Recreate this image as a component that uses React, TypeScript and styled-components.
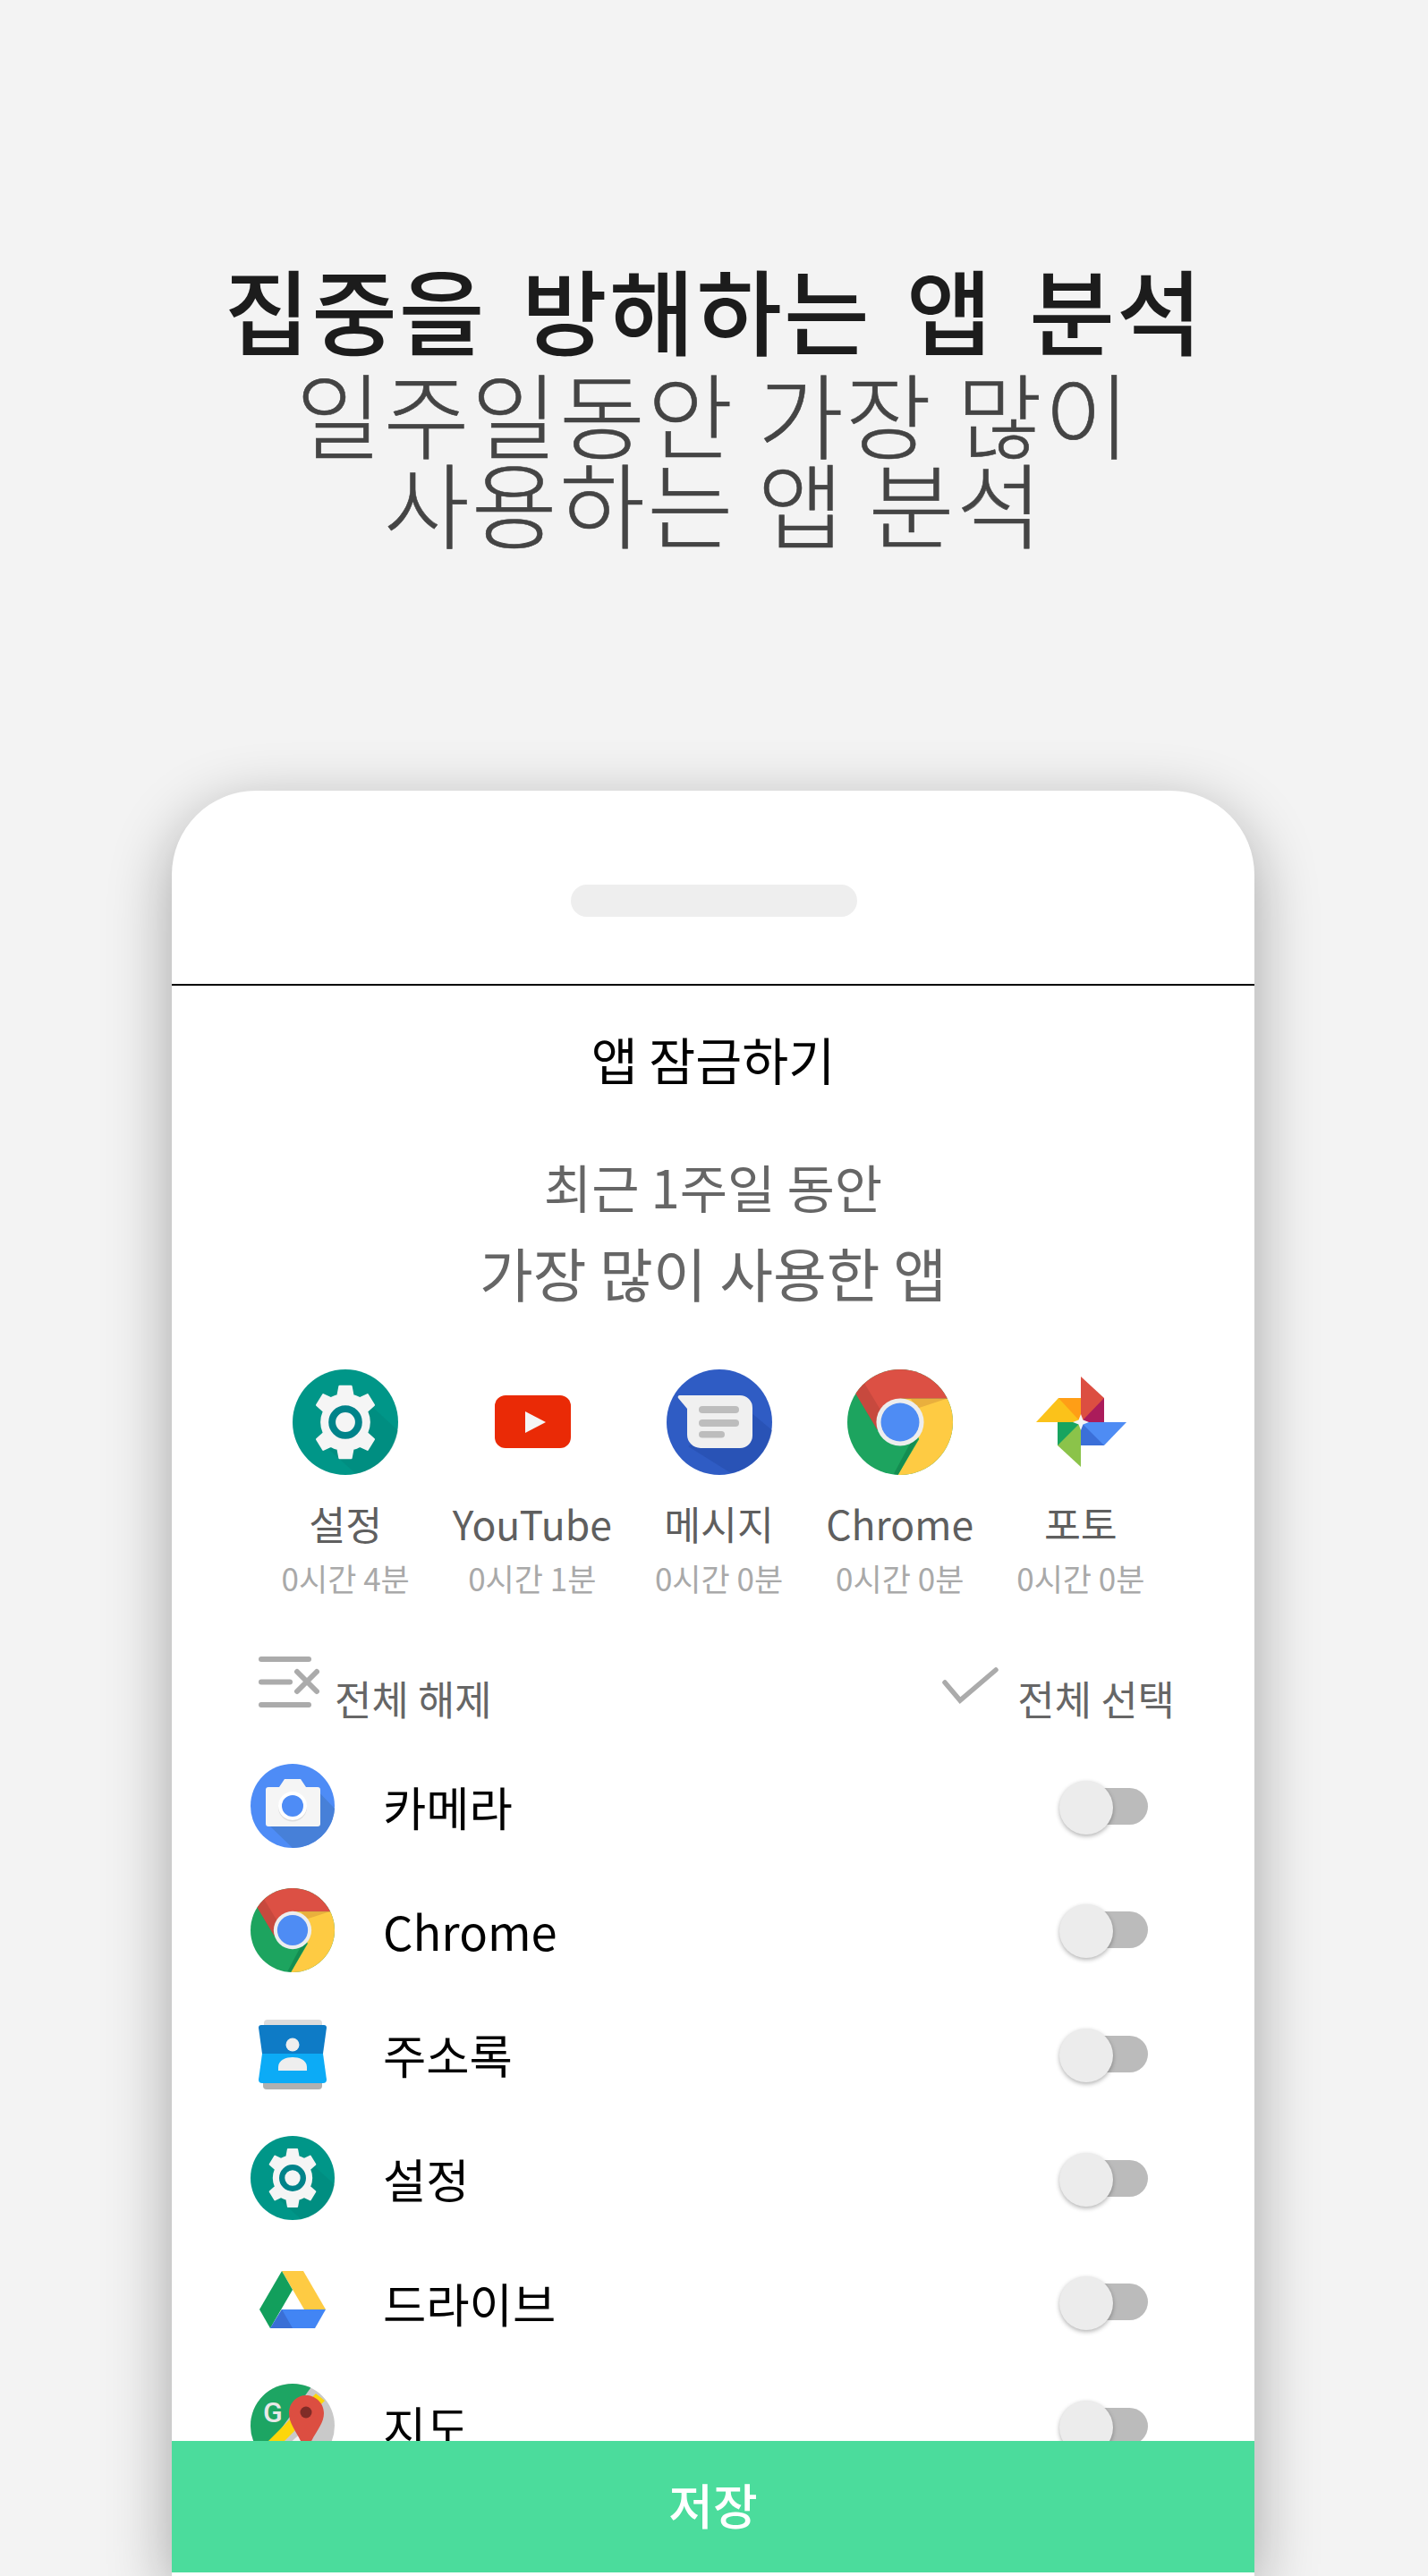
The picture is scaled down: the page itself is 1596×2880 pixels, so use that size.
import React from "react";
import styled, { createGlobalStyle } from "styled-components";

const FONT = `"Noto Sans CJK KR", "Noto Sans", sans-serif`;

const Global = createGlobalStyle`
  html, body { margin: 0; padding: 0; background: #f3f3f3; }
  body { font-family: ${FONT}; }
  * { box-sizing: border-box; }
`;

const Page = styled.div`
  width: 1596px;
  height: 2880px;
  overflow: hidden;
  background: #f3f3f3;
  display: flex;
  flex-direction: column;
  align-items: center;
`;

const Headline = styled.header`
  height: 884px;
  padding-top: 295px;
  text-align: center;
  font-size: 104px;
  line-height: 100px;
  letter-spacing: 2.5px;
  color: #444;
  font-weight: 300;
`;

const HeadStrong = styled.div`
  font-weight: 500;
  color: #1c1c1c;
  letter-spacing: 2px;
  word-spacing: 14px;
  margin-bottom: 16px;
`;

const HeadLine = styled.div`
  -webkit-text-stroke: 0.6px #444;
`;

const Phone = styled.section`
  width: 1210px;
  height: 1996px;
  flex: none;
  margin-right: 2px;
  background: #fff;
  border-radius: 94px 94px 0 0;
  box-shadow: 0 20px 70px rgba(0, 0, 0, 0.33);
  display: flex;
  flex-direction: column;
`;

const PhoneTop = styled.div`
  height: 218px;
  flex: none;
  display: flex;
  align-items: flex-start;
  justify-content: center;
  padding: 105px 0 0 2px;
  border-bottom: 2px solid #000;
`;

const Speaker = styled.div`
  width: 320px;
  height: 36px;
  border-radius: 18px;
  background: #eeeeee;
`;

const Content = styled.div`
  flex: 1;
  min-height: 0;
  overflow: hidden;
  display: flex;
  flex-direction: column;
`;

const Title = styled.h1`
  margin: 0;
  padding-top: 39px;
  font-size: 56.5px;
  line-height: 84px;
  font-weight: 400;
  color: #000;
  text-align: center;
`;

const Intro = styled.div`
  padding-top: 53px;
  text-align: center;
  color: #666;
`;

const IntroLine = styled.div<{ $size: number; $height: number }>`
  font-size: ${(p) => p.$size}px;
  line-height: ${(p) => p.$height}px;
`;

const TopApps = styled.div`
  margin-top: 60px;
  display: flex;
  justify-content: center;
  gap: 48px;
`;

const TopApp = styled.div`
  display: flex;
  flex-direction: column;
  align-items: center;
`;

const TopIcon = styled.div`
  width: 118px;
  height: 118px;
  svg { display: block; width: 100%; height: 100%; }
`;

const TopName = styled.div`
  margin-top: 22px;
  font-size: 44.5px;
  line-height: 64px;
  color: #5f5f5f;
`;

const TopTime = styled.div`
  margin-top: 2px;
  font-size: 35px;
  line-height: 54px;
  color: #a9a9a9;
`;

const Bulk = styled.div`
  margin-top: 61px;
  padding: 0 89px 0 97px;
  height: 96px;
  display: flex;
  justify-content: space-between;
`;

const BulkAction = styled.div<{ $gap: number; $lift: number }>`
  display: flex;
  align-items: flex-end;
  gap: ${(p) => p.$gap}px;
  font-size: 45px;
  line-height: 60px;
  color: #666;
  svg { display: block; margin-bottom: ${(p) => p.$lift}px; }
`;

const List = styled.div`
  padding: 0 0 0 88px;
  margin-top: 21px;
`;

const Row = styled.div`
  height: 138.6px;
  display: flex;
  align-items: center;
`;

const RowIcon = styled.div`
  width: 94px;
  height: 94px;
  flex: none;
  svg { display: block; width: 100%; height: 100%; }
`;

const RowName = styled.div`
  margin-left: 54px;
  flex: 1;
  font-size: 52.5px;
  line-height: 80px;
  color: #000;
`;

const Toggle = styled.div`
  position: relative;
  width: 82px;
  height: 41px;
  margin-right: 119px;
  border-radius: 21px;
  background: #bbbbbb;
`;

const Thumb = styled.div`
  position: absolute;
  left: -17px;
  top: -8px;
  width: 60px;
  height: 60px;
  border-radius: 50%;
  background: #ececec;
  box-shadow: 0 2px 5px rgba(0, 0, 0, 0.3);
`;

const Save = styled.button`
  flex: none;
  height: 147px;
  margin-bottom: 4px;
  border: 0;
  padding: 0 0 6px;
  background: #4bdc9c;
  color: #fff;
  font-family: ${FONT};
  font-size: 54px;
  font-weight: 500;
`;

const GEAR =
  "M44.5 16 h11 l1.6 8.6 a26 26 0 0 1 6.6 2.8 l7.3 -3.4 6 9.8 -6.6 5.9 a26 26 0 0 1 0 20.6 l6.6 5.9 -6 9.8 -7.3 -3.4 a26 26 0 0 1 -6.6 2.8 L55.5 84 h-11 l-1.6 -8.6 a26 26 0 0 1 -6.6 -2.8 l-7.3 3.4 -6 -9.8 6.6 -5.9 a26 26 0 0 1 0 -20.6 l-6.6 -5.9 6 -9.8 7.3 3.4 a26 26 0 0 1 6.6 -2.8 z";

const SettingsIcon = () => (
  <svg viewBox="0 0 100 100">
    <circle cx="50" cy="50" r="50" fill="#009688" />
    <path d="M75 35 L100 58 A50 50 0 0 1 60 99 L30 72 z" fill="#00796b" opacity=".25" />
    <path d={GEAR} fill="#f5f5f5" stroke="#f5f5f5" strokeWidth="2" strokeLinejoin="round" />
    <circle cx="50" cy="50" r="12.6" fill="#f5f5f5" stroke="#00838a" strokeWidth="6.7" />
  </svg>
);

const YouTubeIcon = () => (
  <svg viewBox="0 0 118 118">
    <rect x="17" y="29" width="85" height="59" rx="12" fill="#ea2a06" />
    <path d="M51 47 L74 59 L51 71 z" fill="#f5f5f5" />
  </svg>
);

const MessagesIcon = () => (
  <svg viewBox="0 0 118 118">
    <circle cx="59" cy="59" r="59" fill="#2f5cc4" />
    <path d="M94 48 L118 68 A59 59 0 0 1 72 116 L24 86 z" fill="#2449a8" opacity=".5" />
    <path d="M15 29 H82 a14 14 0 0 1 14 14 V74 a14 14 0 0 1 -14 14 H38 a15 15 0 0 1 -15 -15 V44 L13 32 a2 2 0 0 1 2 -3 z" fill="#f0f0f0" />
    <rect x="36" y="41" width="45" height="8" rx="4" fill="#bdbdbd" />
    <rect x="36" y="56" width="45" height="8" rx="4" fill="#bdbdbd" />
    <rect x="36" y="69" width="29" height="7.5" rx="3.75" fill="#bdbdbd" />
  </svg>
);

const ChromeIcon = () => (
  <svg viewBox="0 0 100 100">
    <defs>
      <clipPath id="chrome-disc">
        <circle cx="50" cy="50" r="50" />
      </clipPath>
    </defs>
    <g clipPath="url(#chrome-disc)">
      <rect width="100" height="100" fill="#1da45f" />
      <path d="M50 50 L28.4 57 L8 23 L8 -5 L100 -5 L100 27.8 L50 27.8 z" fill="#dc5044" />
      <path d="M50 27.8 L100 27.8 L110 110 L46 110 L48 100 L68 66 z" fill="#fecb43" />
      <path d="M28 57 L8 23 L16 13 L36 46 z" fill="#a83f36" opacity=".4" />
      <path d="M60 27.8 L94 27.8 L66 37 z" fill="#e0a33a" opacity=".7" />
      <path d="M48 100 L67 66 L60 69 L44 99 z" fill="#0f7f48" opacity=".6" />
    </g>
    <circle cx="50" cy="50" r="22.5" fill="#ededed" />
    <circle cx="50" cy="50" r="18.2" fill="#4e8cf4" />
  </svg>
);

const PhotosIcon = () => (
  <svg viewBox="0 0 118 118">
    <path d="M59 8 L85 32 V59 H59 z" fill="#dc4e41" />
    <path d="M59 59 L85 32 V59 z" fill="#ab1c5b" />
    <path d="M9 59 L34 32 H59 V59 z" fill="#fbc21a" />
    <path d="M34 32 H59 V59 z" fill="#ff9e16" />
    <path d="M59 109 L33 85 V59 H59 z" fill="#8bc34a" />
    <path d="M33 59 H59 L33 85 z" fill="#18a45f" />
    <path d="M110 59 L85 85 H59 V59 z" fill="#4e8cf4" />
    <path d="M59 59 L85 85 H59 z" fill="#3b6fd8" />
    <path d="M59 50 L61.5 56.5 L68 59 L61.5 61.5 L59 68 L56.5 61.5 L50 59 L56.5 56.5 z" fill="#f5f5f5" />
  </svg>
);

const CameraIcon = () => (
  <svg viewBox="0 0 94 94">
    <circle cx="47" cy="47" r="47" fill="#4e8cf6" />
    <path d="M72 27 L94 50 A47 47 0 0 1 47 94 L20 68 z" fill="#4780d8" />
    <path d="M20 26 H32 L38 17 H56 L62 26 H75 a3 3 0 0 1 3 3 V67 a3 3 0 0 1 -3 3 H20 a3 3 0 0 1 -3 -3 V29 a3 3 0 0 1 3 -3 z" fill="#f5f5f5" />
    <circle cx="47" cy="48.5" r="16" fill="#ddd" />
    <circle cx="47" cy="47" r="16" fill="#fff" />
    <circle cx="47" cy="47" r="12" fill="#4e8cf6" />
  </svg>
);

const ContactsIcon = () => (
  <svg viewBox="0 0 94 94">
    <rect x="15" y="9" width="65" height="12" rx="4" fill="#dcdcdc" />
    <rect x="14" y="74" width="66" height="13" rx="4" fill="#b0b0b0" />
    <path d="M12 15 H82 a3 3 0 0 1 3 3 L81 47 H13 L9 18 a3 3 0 0 1 3 -3 z" fill="#0e7bc6" />
    <path d="M13 47 H81 L85 76 a4 4 0 0 1 -4 4 H13 a4 4 0 0 1 -4 -4 z" fill="#0cabf6" />
    <circle cx="47" cy="37" r="7.5" fill="#eee" />
    <path d="M31 66 V62 C31 54 40 51 47 51 C54 51 63 54 63 62 V66 z" fill="#eee" />
  </svg>
);

const DriveIcon = () => (
  <svg viewBox="0 0 94 94">
    <path d="M35 12 L59 12 L84 55 L60 55 z" fill="#fecb43" />
    <path d="M35 12 L47 33 L22 76 L10 55 z" fill="#129f5c" />
    <path d="M35 55 L84 55 L72 76 L22 76 z" fill="#4285f4" />
    <path d="M35 55 L47 76 L22 76 z" fill="#3a6fd6" />
  </svg>
);

const MapsIcon = () => (
  <svg viewBox="0 0 94 94">
    <defs>
      <clipPath id="maps-disc">
        <circle cx="47" cy="47" r="47" />
      </clipPath>
    </defs>
    <g clipPath="url(#maps-disc)">
      <rect width="94" height="94" fill="#c9c9c9" />
      <path d="M-2 -2 H72 L20 70 H-2 z" fill="#1da563" />
      <path d="M73 11 L83 19 L20 82 L10 74 z" fill="#fdd60a" />
      <path d="M40 70 L62 50 L58 94 H40 z" fill="#f2f2f2" />
      <path d="M30 72 L38 64 L46 74 L36 94 z" fill="#4e8cf4" />
    </g>
    <text x="25" y="43" fontSize="32" fontWeight="500" fill="#e8e8e8" textAnchor="middle" fontFamily="'Roboto', sans-serif">G</text>
    <path d="M62 13 C72 13 82 21 82 33 C82 47 70 55 62 78 C54 55 43 47 43 33 C43 21 52 13 62 13 z" fill="#dc4e41" />
    <circle cx="62" cy="32" r="6.5" fill="#802c27" />
  </svg>
);

const ClearAllIcon = () => (
  <svg width="68" height="57" viewBox="0 0 68 57" fill="none" stroke="#ababab" strokeWidth="6" strokeLinecap="round">
    <path d="M3 3 H56" />
    <path d="M3 28.5 H35" />
    <path d="M3 54 H56" />
    <path d="M43 17 L65 39" />
    <path d="M65 17 L43 39" />
  </svg>
);

const CheckIcon = () => (
  <svg width="63" height="41" viewBox="0 0 63 41" fill="none" stroke="#ababab" strokeWidth="5.5" strokeLinecap="round">
    <path d="M3 17 L20 37 L60 3" />
  </svg>
);

const topApps = [
  { name: "설정", time: "0시간 4분", icon: <SettingsIcon /> },
  { name: "YouTube", time: "0시간 1분", icon: <YouTubeIcon /> },
  { name: "메시지", time: "0시간 0분", icon: <MessagesIcon /> },
  { name: "Chrome", time: "0시간 0분", icon: <ChromeIcon /> },
  { name: "포토", time: "0시간 0분", icon: <PhotosIcon /> },
];

const rows = [
  { name: "카메라", icon: <CameraIcon /> },
  { name: "Chrome", icon: <ChromeIcon /> },
  { name: "주소록", icon: <ContactsIcon /> },
  { name: "설정", icon: <SettingsIcon /> },
  { name: "드라이브", icon: <DriveIcon /> },
  { name: "지도", icon: <MapsIcon /> },
];

export default function App() {
  return (
    <>
      <Global />
      <Page>
        <Headline>
          <HeadStrong>집중을 방해하는 앱 분석</HeadStrong>
          <HeadLine>일주일동안 가장 많이</HeadLine>
          <HeadLine>사용하는 앱 분석</HeadLine>
        </Headline>
        <Phone>
          <PhoneTop>
            <Speaker />
          </PhoneTop>
          <Content>
            <Title>앱 잠금하기</Title>
            <Intro>
              <IntroLine $size={58} $height={96}>최근 1주일 동안</IntroLine>
              <IntroLine $size={65} $height={97}>가장 많이 사용한 앱</IntroLine>
            </Intro>
            <TopApps>
              {topApps.map((a) => (
                <TopApp key={a.name}>
                  <TopIcon>{a.icon}</TopIcon>
                  <TopName>{a.name}</TopName>
                  <TopTime>{a.time}</TopTime>
                </TopApp>
              ))}
            </TopApps>
            <Bulk>
              <BulkAction $gap={17} $lift={20}>
                <ClearAllIcon />
                전체 해제
              </BulkAction>
              <BulkAction $gap={21} $lift={24}>
                <CheckIcon />
                전체 선택
              </BulkAction>
            </Bulk>
            <List>
              {rows.map((r) => (
                <Row key={r.name}>
                  <RowIcon>{r.icon}</RowIcon>
                  <RowName>{r.name}</RowName>
                  <Toggle>
                    <Thumb />
                  </Toggle>
                </Row>
              ))}
            </List>
          </Content>
          <Save>저장</Save>
        </Phone>
      </Page>
    </>
  );
}
